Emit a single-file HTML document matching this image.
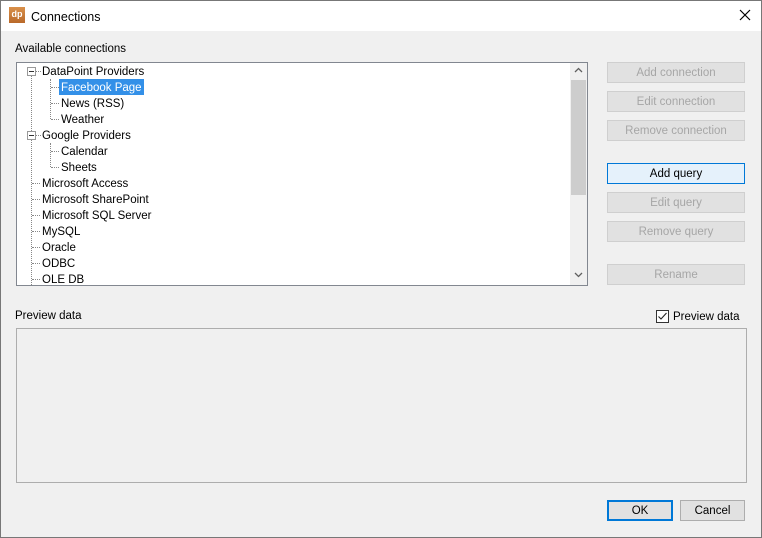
<!DOCTYPE html><html><head><style>
body{margin:0;width:762px;height:538px;background:#f0f0f0;font-family:"Liberation Sans",sans-serif;font-size:11.5px;color:#000;position:relative;overflow:hidden}
.a{position:absolute}
.win{position:absolute;left:0;top:0;width:760px;height:536px;border:1px solid #777;}
.btn{position:absolute;left:607px;width:136px;height:19px;border:1px solid #cfcfcf;background:#e1e1e1;color:#a6a6a6;text-align:center;line-height:21px;font-size:11.5px}
.t{position:absolute;white-space:nowrap;line-height:18px;height:16px}
.hd{position:absolute;border-top:1px dotted #888;height:0}
.vd{position:absolute;border-left:1px dotted #888;width:0}
.bx{position:absolute;width:7px;height:7px;border:1px solid #999;background:#fff}
.bx:after{content:"";position:absolute;left:1px;top:3px;width:5px;height:1px;background:#333}
</style></head><body>
<div class="a" style="left:0;top:0;width:762px;height:31px;background:#fff"></div>
<div class="a" style="left:9px;top:7px;width:16px;height:16px;background:linear-gradient(#d9904a,#b9692a);color:#fff;font-size:9px;font-weight:bold;line-height:15px;text-align:center">dp</div>
<div class="t" style="left:31px;top:8px;font-size:12.5px">Connections</div>
<svg class="a" style="left:739px;top:9px" width="12" height="12"><path d="M1 1L11 11M11 1L1 11" stroke="#000" stroke-width="1.2"/></svg>
<div class="win"></div>
<div class="t" style="left:15px;top:40px">Available connections</div>
<div class="a" style="left:16px;top:62px;width:570px;height:222px;border:1px solid #828790;background:#fff"></div>
<div class="a" style="left:570px;top:63px;width:17px;height:222px;background:#f0f0f0"></div>
<div class="a" style="left:571px;top:80px;width:15px;height:115px;background:#cdcdcd"></div>
<svg class="a" style="left:574px;top:67px" width="9" height="6"><path d="M1 5L4.5 1.5L8 5" stroke="#606060" fill="none" stroke-width="1.3"/></svg>
<svg class="a" style="left:574px;top:272px" width="9" height="6"><path d="M1 1L4.5 4.5L8 1" stroke="#606060" fill="none" stroke-width="1.3"/></svg>
<div class="vd" style="left:31px;top:75px;height:210px"></div>
<div class="vd" style="left:50px;top:79px;height:40px"></div>
<div class="vd" style="left:50px;top:143px;height:24px"></div>
<div class="hd" style="left:36px;top:71px;width:5px"></div>
<div class="hd" style="left:36px;top:135px;width:5px"></div>
<div class="hd" style="left:51px;top:87px;width:8px"></div>
<div class="hd" style="left:51px;top:103px;width:8px"></div>
<div class="hd" style="left:51px;top:119px;width:8px"></div>
<div class="hd" style="left:51px;top:151px;width:8px"></div>
<div class="hd" style="left:51px;top:167px;width:8px"></div>
<div class="hd" style="left:32px;top:183px;width:8px"></div>
<div class="hd" style="left:32px;top:199px;width:8px"></div>
<div class="hd" style="left:32px;top:215px;width:8px"></div>
<div class="hd" style="left:32px;top:231px;width:8px"></div>
<div class="hd" style="left:32px;top:247px;width:8px"></div>
<div class="hd" style="left:32px;top:263px;width:8px"></div>
<div class="hd" style="left:32px;top:279px;width:8px"></div>
<div class="bx" style="left:27px;top:67px"></div>
<div class="bx" style="left:27px;top:131px"></div>
<div class="t" style="left:42px;top:63px">DataPoint Providers</div>
<div class="t" style="left:59px;top:79px;background:#3390e8;color:#fff;padding:0 2px">Facebook Page</div>
<div class="t" style="left:61px;top:95px">News (RSS)</div>
<div class="t" style="left:61px;top:111px">Weather</div>
<div class="t" style="left:42px;top:127px">Google Providers</div>
<div class="t" style="left:61px;top:143px">Calendar</div>
<div class="t" style="left:61px;top:159px">Sheets</div>
<div class="t" style="left:42px;top:175px">Microsoft Access</div>
<div class="t" style="left:42px;top:191px">Microsoft SharePoint</div>
<div class="t" style="left:42px;top:207px">Microsoft SQL Server</div>
<div class="t" style="left:42px;top:223px">MySQL</div>
<div class="t" style="left:42px;top:239px">Oracle</div>
<div class="t" style="left:42px;top:255px">ODBC</div>
<div class="t" style="left:42px;top:271px;height:13px;overflow:hidden">OLE DB</div>
<div class="btn" style="top:62px">Add connection</div>
<div class="btn" style="top:91px">Edit connection</div>
<div class="btn" style="top:120px">Remove connection</div>
<div class="btn" style="top:163px;background:#e5f1fb;border-color:#0078d7;color:#000">Add query</div>
<div class="btn" style="top:192px">Edit query</div>
<div class="btn" style="top:221px">Remove query</div>
<div class="btn" style="top:264px">Rename</div>
<div class="t" style="left:15px;top:307px">Preview data</div>
<div class="a" style="left:656px;top:310px;width:11px;height:11px;border:1px solid #333;background:#fff"></div>
<svg class="a" style="left:657px;top:311px" width="11" height="11"><path d="M1.5 5.5L4 8L9.5 2" stroke="#222" fill="none" stroke-width="1.1"/></svg>
<div class="t" style="left:673px;top:308px">Preview data</div>
<div class="a" style="left:16px;top:328px;width:729px;height:153px;border:1px solid #adadad"></div>
<div class="btn" style="left:607px;top:500px;width:62px;height:17px;line-height:19px;border:2px solid #0078d7;color:#000">OK</div>
<div class="btn" style="left:680px;top:500px;width:63px;height:19px;border-color:#adadad;color:#000">Cancel</div>
</body></html>
